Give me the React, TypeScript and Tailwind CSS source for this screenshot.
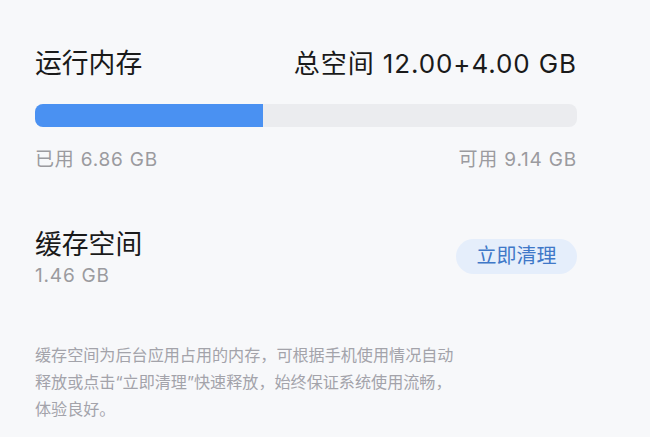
import React from 'react';

const usedGb = 6.86;
const freeGb = 9.14;

const App = () => {
  const usedPct = (usedGb / (usedGb + freeGb)) * 100;

  return (
    <div
      className="min-h-screen bg-[#f7f8fa] pl-[35px] pr-[73px] pt-[45px]"
      style={{ fontFamily: 'Inter, "Noto Sans CJK SC", sans-serif' }}
    >
      {/* 运行内存 */}
      <section>
        <div className="flex h-[36px] items-center justify-between text-[26px] text-[#1a1a1a]">
          <span className="text-[26.8px]">运行内存</span>
          <span className="tracking-[0.9px]">总空间 12.00+4.00 GB</span>
        </div>

        <div className="mt-[23px] h-[23px] overflow-hidden rounded-[8px] bg-[#ebecef]">
          <div className="h-full bg-[#4a91f2]" style={{ width: `${usedPct - 0.9}%` }} />
        </div>

        <div className="mt-[21px] flex h-[24px] items-center justify-between text-[19px] tracking-[0.8px] text-[#9b9b9f]">
          <span>已用 {usedGb.toFixed(2)} GB</span>
          <span>可用 {freeGb.toFixed(2)} GB</span>
        </div>
      </section>

      {/* 缓存空间 */}
      <section className="mt-[56px] flex items-center justify-between">
        <div>
          <div className="h-[32px] text-[26.8px] leading-[32px] text-[#1a1a1a]">缓存空间</div>
          <div className="mt-[4px] h-[24px] text-[19px] leading-[24px] tracking-[0.8px] text-[#9b9b9f]">1.46 GB</div>
        </div>
        <button className="mt-[-4px] h-[35px] w-[121px] rounded-full bg-[#e5eefb] text-[20px] text-[#3f78c8]">
          立即清理
        </button>
      </section>

      <p className="mt-[54px] text-[16.1px] leading-[27px] text-[#a3a3aa]">
        缓存空间为后台应用占用的内存，可根据手机使用情况自动
        <br />
        释放或点击“立即清理”快速释放，始终保证系统使用流畅，
        <br />
        体验良好。
      </p>
    </div>
  );
};

export default App;
